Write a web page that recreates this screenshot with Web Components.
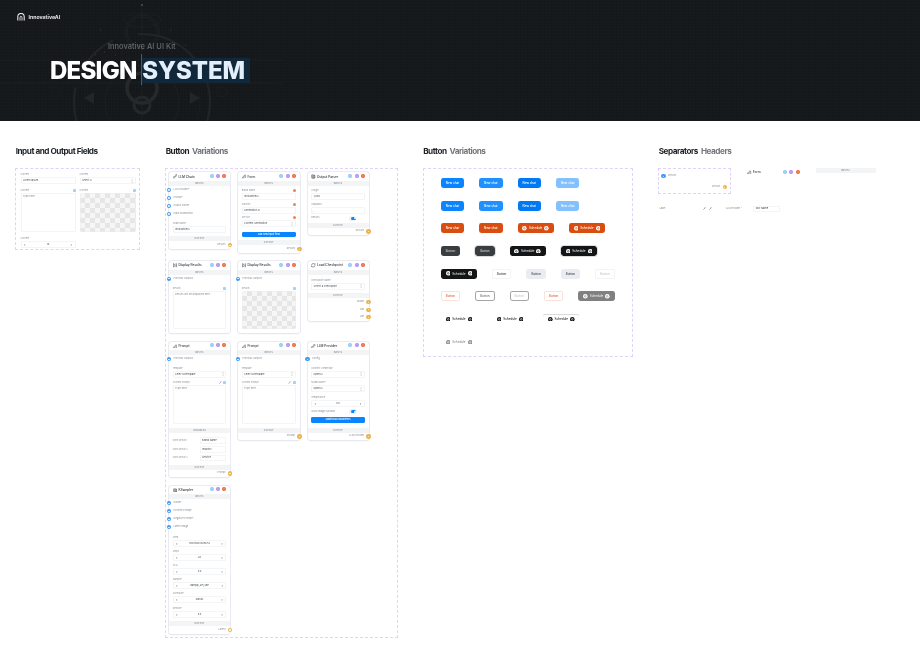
<!DOCTYPE html>
<html>
<head>
<meta charset="utf-8">
<title>Design System</title>
<style>
  html, body { margin: 0; padding: 0; background: #fff; }
  body { width: 920px; height: 662px; overflow: hidden; font-family: Inter, "Liberation Sans", sans-serif; }
</style>
</head>
<body>
<kit-hero></kit-hero>
<kit-board>
  <kit-section title="Input and Output Fields" style="--w:125px">
    <kit-panel style="--pad:4.5px 4.5px 1.5px 4.5px">
      <kit-grid style="--cols:55px 56px;--col-gap:4px;--row-gap:4.5px">
        <ui-field label="Content" value="Lorem ipsum"></ui-field>
        <ui-field label="Content" value="Select X" kind="select"></ui-field>
        <ui-field label="Content" value="Type here..." kind="area" mark="blue" style="--area:39.5px"></ui-field>
        <ui-field label="Content" kind="checker" mark="blue" style="--area:39.5px"></ui-field>
        <ui-field label="Content" value="10" kind="stepper"></ui-field>
      </kit-grid>
    </kit-panel>
  </kit-section>

  <kit-section title="Button" muted="Variations" style="--w:232.5px">
    <kit-panel style="--pad:3.7px 3px 3px 3px">
      <kit-grid style="--cols:61px 61.5px 61px;--col-gap:8px;--row-gap:8.3px">
        <node-card title="LLM Chain" icon="link">
          <node-band>INPUTS</node-band>
          <node-port>LLM Provider*</node-port><node-port>Prompt*</node-port><node-port>Output Parser</node-port><node-port>Input Moderation</node-port>
          <node-body style="--top:4px;--bottom:3.5px">
            <ui-field label="Chain Name" value="InnovativeAI"></ui-field>
          </node-body>
          <node-band>OUTPUT</node-band>
          <node-port dir="out">Results</node-port>
        </node-card>
        <node-card title="Form" icon="pen">
          <node-band>INPUTS</node-band>
          <node-body style="--gap:2.4px;--bottom:3.3px">
            <ui-field label="Brand Name" value="InnovativeAI" mark="red"></ui-field>
            <ui-field label="Industry" value="Generative AI" mark="red"></ui-field>
            <ui-field label="Service" value="Content Generation" kind="select" mark="red"></ui-field>
            <ui-action style="--mt:2px">Add new input field</ui-action>
          </node-body>
          <node-band>OUTPUT</node-band>
          <node-port dir="out">Results</node-port>
        </node-card>
        <node-card title="Output Parser" icon="doc">
          <node-band>INPUTS</node-band>
          <node-body style="--gap:2.4px;--bottom:2.5px">
            <ui-field label="Length" value="1,000"></ui-field>
            <ui-field label="Separator" value=","></ui-field>
            <ui-toggle>Results</ui-toggle>
          </node-body>
          <node-band>OUTPUT</node-band>
          <node-port dir="out">Results</node-port>
        </node-card>

        <node-card title="Display Results" icon="play">
          <node-band>INPUTS</node-band>
          <node-port>Previous Outputs</node-port>
          <node-body style="--top:3.8px;--bottom:4px">
            <ui-field label="Results" value="Results will be displayed here..." kind="area" mark="blue" style="--area:38.6px"></ui-field>
          </node-body>
        </node-card>
        <node-card title="Display Results" icon="play">
          <node-band>INPUTS</node-band>
          <node-port>Previous Outputs</node-port>
          <node-body style="--top:3.8px;--bottom:4px">
            <ui-field label="Results" kind="checker" mark="blue" style="--area:38.6px"></ui-field>
          </node-body>
        </node-card>
        <node-card title="Load Checkpoint" icon="cycle">
          <node-band>INPUTS</node-band>
          <node-body style="--bottom:3.7px;--top:3.8px">
            <ui-field label="Checkpoint Name" value="Select a checkpoint" kind="select"></ui-field>
          </node-body>
          <node-band>OUTPUT</node-band>
          <node-port dir="out">Model</node-port><node-port dir="out">Clip</node-port><node-port dir="out">Vae</node-port>
        </node-card>

        <node-card title="Prompt" icon="pen">
          <node-band>INPUTS</node-band>
          <node-port>Previous Outputs</node-port>
          <node-body style="--gap:3.3px;--top:3.8px;--bottom:3.7px">
            <ui-field label="Template" value="Select a template" kind="select"></ui-field>
            <ui-field label="Custom Prompt" value="Type here..." kind="area" mark="both" style="--area:38.6px"></ui-field>
          </node-body>
          <node-band>VARIABLES</node-band>
          <node-body style="--gap:2.2px;--top:4.8px;--bottom:3.4px">
            <ui-var label="Form Result 1" value="Brand Name"></ui-var>
            <ui-var label="Form Result 2" value="Industry"></ui-var>
            <ui-var label="Form Result 3" value="Service"></ui-var>
          </node-body>
          <node-band>OUTPUT</node-band>
          <node-port dir="out">Prompt</node-port>
        </node-card>
        <node-card title="Prompt" icon="pen">
          <node-band>INPUTS</node-band>
          <node-port>Previous Outputs</node-port>
          <node-body style="--gap:3.3px;--top:3.8px;--bottom:3.7px">
            <ui-field label="Template" value="Select a template" kind="select"></ui-field>
            <ui-field label="Custom Prompt" value="Type here..." kind="area" mark="both" style="--area:38.6px"></ui-field>
          </node-body>
          <node-band>OUTPUT</node-band>
          <node-port dir="out">Prompt</node-port>
        </node-card>
        <node-card title="LLM Provider" icon="link">
          <node-band>INPUTS</node-band>
          <node-port>Config</node-port>
          <node-body style="--gap:3.3px;--top:3.8px;--bottom:5px">
            <ui-field label="Connect Credential*" value="OpenAI" kind="select"></ui-field>
            <ui-field label="Model Name*" value="OpenAI" kind="select"></ui-field>
            <ui-field label="Temperature" value="0.8" kind="stepper"></ui-field>
            <ui-toggle>Allow Image Uploads</ui-toggle>
            <ui-action>Additional Parameters</ui-action>
          </node-body>
          <node-band>OUTPUT</node-band>
          <node-port dir="out">LLM Provider</node-port>
        </node-card>

        <node-card title="KSampler" icon="doc">
          <node-band>INPUTS</node-band>
          <node-port>Model*</node-port><node-port>Positive Prompt*</node-port><node-port>Negative Prompt*</node-port><node-port>Latent Image</node-port>
          <node-body style="--gap:3.2px;--top:4.5px;--bottom:3.5px">
            <ui-field label="Seed" value="18007868305653" kind="stepper"></ui-field>
            <ui-field label="Steps" value="20" kind="stepper"></ui-field>
            <ui-field label="CFG" value="8.0" kind="stepper"></ui-field>
            <ui-field label="Sampler" value="dpmpp_2m_sde" kind="stepper"></ui-field>
            <ui-field label="Scheduler" value="karras" kind="stepper"></ui-field>
            <ui-field label="Denoise" value="0.8" kind="stepper"></ui-field>
          </node-body>
          <node-band>OUTPUT</node-band>
          <node-port dir="out">Latent</node-port>
        </node-card>
      </kit-grid>
    </kit-panel>
  </kit-section>

  <kit-section title="Button" muted="Variations" style="--w:210.5px">
    <kit-panel style="--pad:9.5px 0 9px 17.3px;--row:12.7px">
      <kit-row><ui-btn kind="blue">New chat</ui-btn><ui-btn kind="blue2">New chat</ui-btn><ui-btn kind="blue3">New chat</ui-btn><ui-btn kind="blue4">New chat</ui-btn></kit-row>
      <kit-row><ui-btn kind="blue">New chat</ui-btn><ui-btn kind="blue2">New chat</ui-btn><ui-btn kind="blue3">New chat</ui-btn><ui-btn kind="blue4">New chat</ui-btn></kit-row>
      <kit-row><ui-btn kind="orange">New chat</ui-btn><ui-btn kind="orange">New chat</ui-btn><ui-btn kind="orange" sched>Schedule</ui-btn><ui-btn kind="orange" sched>Schedule</ui-btn></kit-row>
      <kit-row><ui-btn kind="dark" small>Button</ui-btn><ui-btn kind="dark" small ring>Button</ui-btn><ui-btn kind="black" sched>Schedule</ui-btn><ui-btn kind="black" sched ring>Schedule</ui-btn></kit-row>
      <kit-row><ui-btn kind="black" sched>Schedule</ui-btn><ui-btn kind="line" small>Button</ui-btn><ui-btn kind="soft" small>Button</ui-btn><ui-btn kind="soft" small>Button</ui-btn><ui-btn kind="off" small>Button</ui-btn></kit-row>
      <kit-row><ui-btn kind="peach" small>Button</ui-btn><ui-btn kind="heavy" small>Button</ui-btn><ui-btn kind="heavyoff" small>Button</ui-btn><ui-btn kind="peach" small>Button</ui-btn><ui-btn kind="gray" sched>Schedule</ui-btn></kit-row>
      <kit-row><ui-btn kind="ghost" sched>Schedule</ui-btn><ui-btn kind="ghost" sched>Schedule</ui-btn><ui-btn kind="ghosttop" sched>Schedule</ui-btn></kit-row>
      <kit-row><ui-btn kind="ghostoff" sched>Schedule</ui-btn></kit-row>
    </kit-panel>
  </kit-section>

  <kit-section title="Separators" muted="Headers" style="--w:240px">
    <sep-sheet></sep-sheet>
  </kit-section>
</kit-board>

<script>
class KitHero extends HTMLElement {
  connectedCallback() {
    this.attachShadow({ mode: 'open' });
    this.shadowRoot.innerHTML = `
      <style>
        :host { display: block; position: relative; height: 121px; overflow: hidden; background: #15181b; color: #fff; }
        .tex { position: absolute; inset: 0; background-image:
          repeating-linear-gradient(0deg, rgba(255,255,255,.008) 0 1px, transparent 1px 3px),
          repeating-linear-gradient(90deg, rgba(255,255,255,.008) 0 1px, transparent 1px 3px); }
        svg.art { position: absolute; left: 0; top: 0; filter: blur(.3px); }
        .wrap { position: relative; padding: 13px 0 0 17px; filter: blur(.25px); }
        .logo { display: flex; align-items: center; gap: 3.5px; font: 700 5.2px/8px Inter, sans-serif; color: #e6e6e6; }
        .kit { margin: 20.5px 0 0 91px; font: 500 7.5px/10px Inter, sans-serif; color: #66696c; }
        h1 { display: flex; margin: 6.5px 0 0 33px; font: 800 24px/25px Inter, sans-serif; letter-spacing: -.75px; }
        .sys { position: relative; margin-left: 5.5px; color: #e3f0fb; z-index: 0; letter-spacing: -.05px; }
        .sys::before { content: ''; position: absolute; z-index: -1; left: -.5px; right: -5px; top: 0; bottom: 0; background: #11273a; }
        .sys::after { content: ''; position: absolute; left: -1.5px; top: -4px; width: 1.6px; height: 31px; background: #0e66c4; }
      </style>
      <div class="tex"></div>
      <svg class="art" width="920" height="121" viewBox="0 0 920 121" fill="none" stroke="#222629" stroke-width=".7">
        <path d="M0 60H283M0 83H283" stroke="#1b2226"/>
        <path d="M142 5V120" stroke="#212528"/>
        <circle cx="142" cy="5" r=".9" fill="#55595c" stroke="none"/>
        <circle cx="142" cy="32" r="17"/><circle cx="142" cy="32" r="15"/>
        <ellipse cx="142" cy="20" rx="19" ry="7" stroke="#1e2225"/>
        <path d="M122 45v15M128 47v14M156 47v14M162 45v15" stroke="#1d2124"/>
        <circle cx="142" cy="102" r="68" stroke="#212528" stroke-width="2.2" stroke-dasharray="70 16 46 26"/>
        <circle cx="142" cy="102" r="58" stroke="#1c2023"/>
        <circle cx="142" cy="102" r="37" stroke="#1f2326"/>
        <circle cx="142" cy="88" r="15" stroke="#26292c" stroke-width="3.6"/>
        <circle cx="142" cy="105" r="8" stroke="#24282b" stroke-width="3"/>
        <path d="M84 98l10-6v12zM200 98l-10-6v12z" fill="#222629" stroke="none"/>
        <circle cx="56" cy="92" r="5" stroke="#1d2124"/><circle cx="222" cy="92" r="5" stroke="#1d2124"/>
        <path d="M100 30h1M115 55h1M170 30h1M185 45h1M95 55h1M178 80h1M104 52h1" stroke="#34383b" stroke-width="1"/>
      </svg>
      <div class="wrap">
        <div class="logo">
          <svg width="8" height="8" viewBox="0 0 8 8" fill="none" stroke="#e8e8e8"><path d="M.8 7.6V3.6a3.2 3.2 0 0 1 6.4 0v4" stroke-width="1.1"/><path d="M3 7.6V4.4a1 1 0 0 1 2 0v3.2" stroke-width=".9"/></svg>
          <span>InnovativeAI</span>
        </div>
        <div class="kit">Innovative AI UI Kit</div>
        <h1><span>DESIGN</span><span class="sys">SYSTEM</span></h1>
      </div>`;
  }
}

class KitBoard extends HTMLElement {
  connectedCallback() {
    this.attachShadow({ mode: 'open' });
    this.shadowRoot.innerHTML = `
      <style>:host { display: flex; align-items: flex-start; gap: 25px; padding: 25px 0 0 15px; filter: blur(.3px); }</style>
      <slot></slot>`;
  }
}

class KitSection extends HTMLElement {
  connectedCallback() {
    const muted = this.getAttribute('muted');
    this.attachShadow({ mode: 'open' });
    this.shadowRoot.innerHTML = `
      <style>
        :host { display: block; flex: none; width: var(--w); }
        h2 { margin: 0 0 10.5px .7px; font: 700 8.2px/11px Inter, sans-serif; letter-spacing: -.48px; color: #1d2125; white-space: nowrap; }
        h2 span { color: #73777b; margin-left: 1.5px; }
      </style>
      <h2>${this.getAttribute('title')}${muted ? ` <span>${muted}</span>` : ''}</h2>
      <slot></slot>`;
  }
}

class KitPanel extends HTMLElement {
  connectedCallback() {
    this.attachShadow({ mode: 'open' });
    this.shadowRoot.innerHTML = `
      <style>
        :host { display: flex; flex-direction: column; gap: var(--row, 0); box-sizing: border-box; padding: var(--pad); border: 1px dashed #e0d2fa; }
      </style>
      <slot></slot>`;
  }
}

class KitGrid extends HTMLElement {
  connectedCallback() {
    this.attachShadow({ mode: 'open' });
    this.shadowRoot.innerHTML = `
      <style>
        :host { display: grid; grid-template-columns: var(--cols); column-gap: var(--col-gap); row-gap: var(--row-gap); align-items: start; }
      </style>
      <slot></slot>`;
  }
}

class KitRow extends HTMLElement {
  connectedCallback() {
    this.attachShadow({ mode: 'open' });
    this.shadowRoot.innerHTML = `
      <style>:host { display: flex; gap: 15px; align-items: center; height: 10px; }</style>
      <slot></slot>`;
  }
}

const ICONS = {
  link: '<path d="M3.4 2.6 5.6 .9a1 1 0 0 1 1.4 1.4L5.3 4.4M2.6 3.4.9 5.6a1 1 0 0 0 1.4 1.4l2.1-1.7M2.8 5.2l2.4-2.4"/>',
  pen: '<path d="M1 7l.4-1.8L5.3 1.3l1.4 1.4-3.9 3.9zM5.6 5.4h1.6M6.4 4.6v1.6"/>',
  doc: '<path d="M1.2 1.6h4.2v5.2H1.2zM5.4 2.6h1.4v4.6H2.4"/><path d="M2.2 3.2h2.2M2.2 4.6h2.2"/>',
  play: '<path d="M1 1v6l3.4-3zM4.4 1.6H7M5.2 3.2H7M5.2 4.8H7M4.4 6.4H7"/>',
  cycle: '<path d="M1 4a3 3 0 0 1 5.2-2L7 2.8V1M7 4a3 3 0 0 1-5.2 2L1 5.2V7"/>'
};

const DOTS = `<svg class="ports" width="4" height="4" viewBox="0 0 8 8" fill="none"><circle cx="4" cy="4" r="4" fill="currentColor"/><path d="M2.8 2.8l2.4 2.4M5.2 2.8 2.8 5.2" stroke="#fff" stroke-width=".7"/></svg>`;

class NodeHead extends HTMLElement {
  connectedCallback() {
    const icon = ICONS[this.getAttribute('icon')] || '';
    this.attachShadow({ mode: 'open' });
    this.shadowRoot.innerHTML = `
      <style>
        :host { display: flex; align-items: center; height: var(--head, 8.7px); font: 500 3.2px/4px Inter, sans-serif; color: #2b2f33; }
        svg.i { margin-right: 1.2px; flex: none; }
        .t { flex: 1; white-space: nowrap; }
        .d { display: flex; gap: 2.3px; }
        .a { color: #8cc4f8; } .b { color: #ad88f0; } .c { color: #e8622f; }
      </style>
      <svg class="i" width="4.6" height="4.6" viewBox="0 0 8 8" fill="none" stroke="#33373b" stroke-width=".9">${icon}</svg>
      <span class="t"><slot></slot></span>
      <span class="d"><span class="a">${DOTS}</span><span class="b">${DOTS}</span><span class="c">${DOTS}</span></span>`;
  }
}

class NodeCard extends HTMLElement {
  connectedCallback() {
    this.attachShadow({ mode: 'open' });
    this.shadowRoot.innerHTML = `
      <style>
        :host { display: block; box-sizing: border-box; background: #fff; border-radius: 2.5px; box-shadow: 0 0 0 .8px #e6e8f0, 0 .5px 1.5px rgba(60,70,110,.12); }
        node-head { padding: 0 3.7px; }
      </style>
      <node-head icon="${this.getAttribute('icon')}">${this.getAttribute('title')}</node-head>
      <slot></slot>`;
  }
}

class NodeBand extends HTMLElement {
  connectedCallback() {
    this.attachShadow({ mode: 'open' });
    this.shadowRoot.innerHTML = `
      <style>
        :host { display: block; height: 5px; background: #f2f4f6; text-align: center; font: 500 2.2px/5px Inter, sans-serif; color: #7d8286; letter-spacing: .1px; }
      </style>
      <slot></slot>`;
  }
}

class NodePort extends HTMLElement {
  connectedCallback() {
    const out = this.getAttribute('dir') === 'out';
    this.attachShadow({ mode: 'open' });
    this.shadowRoot.innerHTML = `
      <style>
        :host { display: flex; align-items: center; position: relative; height: ${out ? 7.6 : 8}px; padding: 0 4.5px 0 4.6px; justify-content: ${out ? 'flex-end' : 'flex-start'}; font: 400 2.4px/4px Inter, sans-serif; color: #8a8e92; white-space: nowrap; }
        .dot { position: absolute; top: 50%; transform: translateY(-50%); ${out ? 'right: -2.1px' : 'left: -2.1px'}; width: 4.2px; height: 4.2px; border-radius: 50%; background: ${out ? '#e9b452' : '#3f9bf5'}; display: flex; align-items: center; justify-content: center; }
        .dot::after { content: ''; width: 1.1px; height: 1.1px; border-radius: 50%; background: rgba(255,255,255,.85); }
      </style>
      <span class="dot"></span><slot></slot>`;
  }
}

class NodeBody extends HTMLElement {
  connectedCallback() {
    this.attachShadow({ mode: 'open' });
    this.shadowRoot.innerHTML = `
      <style>
        :host { display: flex; flex-direction: column; gap: var(--gap, 2.4px); padding: var(--top, 3.5px) 3.7px var(--bottom, 3.5px); }
      </style>
      <slot></slot>`;
  }
}

class UiField extends HTMLElement {
  connectedCallback() {
    const kind = this.getAttribute('kind') || 'text';
    const value = this.getAttribute('value') || '';
    const mark = this.getAttribute('mark');
    const pen = '<svg width="3" height="3" viewBox="0 0 8 8" fill="none" stroke="#a86bea" stroke-width="1.6"><path d="M1 7l5-5M5 1l2 2"/></svg>';
    const marks = {
      blue: '<i class="sq"></i>',
      red: '<i class="sq red"></i>',
      both: pen + '<i class="sq"></i>'
    }[mark] || '';
    let box = `<div class="box">${value}</div>`;
    if (kind === 'select') box = `<div class="box sp"><span>${value}</span><svg width="2.4" height="4" viewBox="0 0 4 7" fill="none" stroke="#777" stroke-width=".7"><path d="M.8 2.4 2 1l1.2 1.4M.8 4.6 2 6l1.2-1.4"/></svg></div>`;
    if (kind === 'stepper') box = `<div class="box sp"><b>‹</b><span>${value}</span><b>›</b></div>`;
    if (kind === 'area') box = `<div class="box area"><em>${value}</em></div>`;
    if (kind === 'checker') box = `<div class="box area chk"></div>`;
    this.attachShadow({ mode: 'open' });
    this.shadowRoot.innerHTML = `
      <style>
        :host { display: block; min-width: 0; font-family: Inter, sans-serif; }
        .lab { display: flex; align-items: center; justify-content: space-between; height: 3px; margin-bottom: 1px; font-size: 2.3px; line-height: 3px; color: #8d9195; white-space: nowrap; }
        .lab span:last-child { display: flex; gap: 1.8px; align-items: center; }
        .sq { width: 3px; height: 3px; border-radius: .4px; background: #a5d1fa; display: block; }
        .sq.red { background: #ea8159; border-radius: 50%; }
        .box { box-sizing: border-box; height: 7px; padding: 0 2.4px; display: flex; align-items: center; border-radius: 2px; box-shadow: inset 0 0 0 .6px #eaecf0; font-size: 2.5px; line-height: 3px; color: #45494d; background: #fff; white-space: nowrap; }
        .sp { justify-content: space-between; }
        .sp b { font-weight: 400; font-size: 4px; color: #555; padding: 0 1px; }
        .area { height: var(--area); align-items: flex-start; padding-top: 2px; }
        .area em { font-style: normal; color: #85898d; }
        .chk { background: repeating-conic-gradient(#e6e6e6 0 25%, #f6f6f6 0 50%) 0 0 / 10px 10px; }
      </style>
      <div class="lab"><span>${this.getAttribute('label')}</span><span>${marks}</span></div>
      ${box}`;
  }
}

class UiVar extends HTMLElement {
  connectedCallback() {
    this.attachShadow({ mode: 'open' });
    this.shadowRoot.innerHTML = `
      <style>
        :host { display: flex; align-items: center; justify-content: space-between; font: 400 2.3px/3px Inter, sans-serif; color: #8d9195; }
        div { box-sizing: border-box; width: 26.7px; height: 6.5px; padding: 0 2.4px; display: flex; align-items: center; border-radius: 1.6px; box-shadow: inset 0 0 0 .6px #eaecf0; color: #3f4347; font-size: 2.5px; }
      </style>
      <span>${this.getAttribute('label')}</span><div>${this.getAttribute('value')}</div>`;
  }
}

class UiAction extends HTMLElement {
  connectedCallback() {
    this.attachShadow({ mode: 'open' });
    this.shadowRoot.innerHTML = `
      <style>
        :host { display: block; height: 5.4px; margin-top: var(--mt, 0); border-radius: 1.4px; background: #0a84ff; color: #fff; text-align: center; font: 500 2.4px/5.4px Inter, sans-serif; }
      </style>
      <slot></slot>`;
  }
}

class UiToggle extends HTMLElement {
  connectedCallback() {
    this.attachShadow({ mode: 'open' });
    this.shadowRoot.innerHTML = `
      <style>
        :host { display: flex; align-items: center; justify-content: space-between; height: 4px; padding-right: 8.5px; font: 400 2.4px/4px Inter, sans-serif; color: #8a8e92; white-space: nowrap; }
        i { position: relative; width: 5.5px; height: 3px; border-radius: 2px; background: #0a84ff; box-shadow: -1px 0 0 1px #eef1f5; }
        i::after { content: ''; position: absolute; right: .5px; top: .5px; width: 2px; height: 2px; border-radius: 50%; background: #fff; }
      </style>
      <span><slot></slot></span><i></i>`;
  }
}

const BTN_KINDS = {
  blue: 'background:#0a84ff;color:#fff',
  blue2: 'background:#1f90ff;color:#fff',
  blue3: 'background:#0079f5;color:#fff',
  blue4: 'background:#83c0fe;color:#fff',
  orange: 'background:#d94d11;color:#fff',
  dark: 'background:#3a3d40;color:#d8d8d8',
  black: 'background:#141516;color:#e4e4e4',
  line: 'background:#fff;color:#333;box-shadow:inset 0 0 0 .7px #eeeff1',
  soft: 'background:#e9edf1;color:#34383c',
  off: 'background:#fff;color:#c4c4c4;box-shadow:inset 0 0 0 .7px #eeeff1',
  peach: 'background:#fff;color:#d9582a;box-shadow:inset 0 0 0 .7px #f8d9cd',
  heavy: 'background:#fff;color:#666;box-shadow:inset 0 0 0 1px #a5a5a5',
  heavyoff: 'background:#fff;color:#c4c4c4;box-shadow:inset 0 0 0 1px #a5a5a5',
  gray: 'background:#808080;color:#eee',
  ghost: 'background:transparent;color:#222',
  ghosttop: 'background:transparent;color:#222;box-shadow:inset 0 .8px 0 0 #cfcfcf',
  ghostoff: 'background:transparent;color:#8c8c8c'
};

class UiBtn extends HTMLElement {
  connectedCallback() {
    const kind = this.getAttribute('kind');
    const sched = this.hasAttribute('sched');
    const small = this.hasAttribute('small');
    const ring = this.hasAttribute('ring');
    const fg = ['orange', 'black', 'gray'].includes(kind) ? '#fff' : kind === 'ghostoff' ? '#8c8c8c' : '#111';
    const bg = kind === 'orange' ? '#d94d11' : kind === 'black' ? '#141516' : kind === 'gray' ? '#808080' : '#fff';
    const ic = `<svg width="4.6" height="4.6" viewBox="0 0 10 10"><circle cx="5" cy="5" r="5" fill="${fg}"/><circle cx="5" cy="5" r="1.8" fill="none" stroke="${bg}" stroke-width="1.2"/></svg>`;
    this.attachShadow({ mode: 'open' });
    this.shadowRoot.innerHTML = `
      <style>
        :host { display: block; flex: none; }
        button { all: unset; box-sizing: border-box; display: flex; align-items: center; justify-content: center; gap: 2px; width: ${sched ? 36.2 : small ? 19.4 : 23.4}px; height: 10px; border-radius: 2.4px; font: 500 3px/4px Inter, sans-serif; white-space: nowrap; ${BTN_KINDS[kind]}; ${ring ? 'outline: .7px solid #dcdcdc;' : ''} }
      </style>
      <button>${sched ? ic : ''}<slot></slot>${sched ? ic : ''}</button>`;
  }
}

class SepSheet extends HTMLElement {
  connectedCallback() {
    this.attachShadow({ mode: 'open' });
    this.shadowRoot.innerHTML = `
      <style>
        :host { display: block; }
        .top { display: flex; align-items: flex-start; }
        .box { box-sizing: border-box; width: 72.5px; height: 26.5px; border: 1px dashed #e0d2fa; padding-top: 3.5px; }
        .box node-port { height: 8px; margin: 0 4.7px 0 4.5px; }
        .head { width: 52.5px; margin-left: 16.5px; }
        .band { width: 60px; margin-left: 16px; }
        .low { display: flex; align-items: center; margin-top: 11.7px; font: 400 2.3px/3px Inter, sans-serif; color: #85898d; }
        .lbl { width: 45px; padding-left: 1.5px; box-sizing: border-box; }
        .pens { display: flex; gap: 3px; width: 22.8px; }
        .req { width: 27px; }
        .in { box-sizing: border-box; width: 27px; height: 6.6px; padding: 0 3px; display: flex; align-items: center; border-radius: 1.6px; box-shadow: inset 0 0 0 .6px #eaecf0; color: #33373b; font-size: 2.5px; }
      </style>
      <div class="top">
        <div class="box">
          <node-port>Results</node-port>
          <node-port dir="out" style="margin-top:3px">Results</node-port>
        </div>
        <node-head class="head" icon="pen" style="--head:9px">Form</node-head>
        <node-band class="band">INPUTS</node-band>
      </div>
      <div class="low">
        <span class="lbl">Label</span>
        <span class="pens">
          <svg width="3" height="3" viewBox="0 0 8 8" fill="none" stroke="#555" stroke-width="1.4"><path d="M1 7l5-5M5 1l2 2"/></svg>
          <svg width="3" height="3" viewBox="0 0 8 8" fill="none" stroke="#555" stroke-width="1.4"><path d="M1 7l5-5M5 1l2 2"/></svg>
        </span>
        <span class="req">LLM Provider *</span>
        <span class="in">Doc Name</span>
      </div>`;
  }
}

customElements.define('kit-hero', KitHero);
customElements.define('kit-board', KitBoard);
customElements.define('kit-section', KitSection);
customElements.define('kit-panel', KitPanel);
customElements.define('kit-grid', KitGrid);
customElements.define('kit-row', KitRow);
customElements.define('node-head', NodeHead);
customElements.define('node-card', NodeCard);
customElements.define('node-band', NodeBand);
customElements.define('node-port', NodePort);
customElements.define('node-body', NodeBody);
customElements.define('ui-field', UiField);
customElements.define('ui-var', UiVar);
customElements.define('ui-action', UiAction);
customElements.define('ui-toggle', UiToggle);
customElements.define('ui-btn', UiBtn);
customElements.define('sep-sheet', SepSheet);
</script>
</body>
</html>
